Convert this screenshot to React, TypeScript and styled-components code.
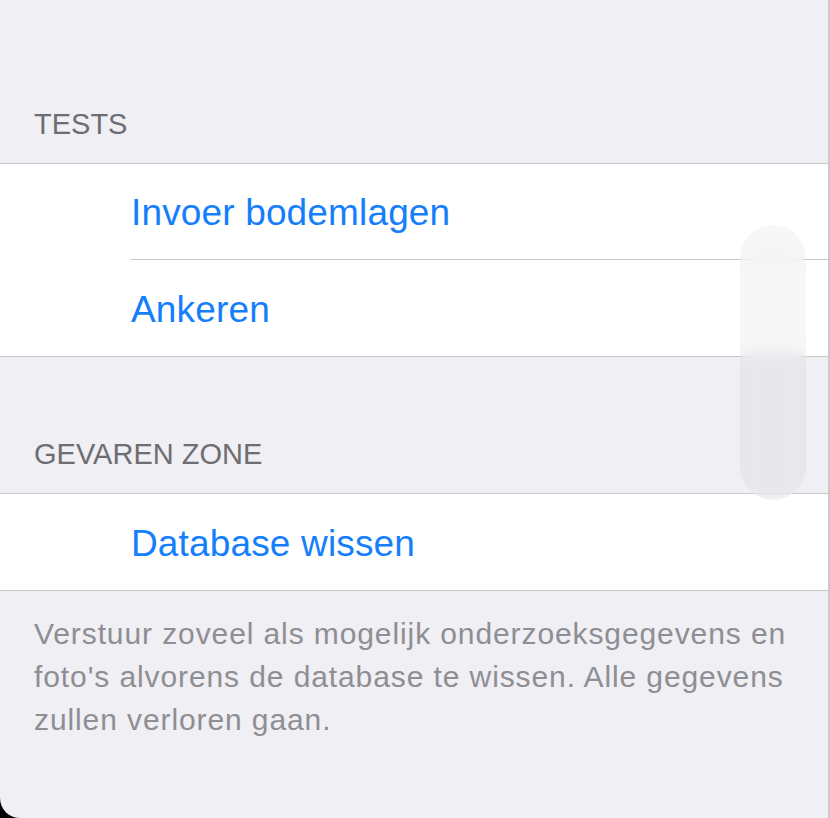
import React from "react";
import styled, { createGlobalStyle } from "styled-components";

const GlobalStyle = createGlobalStyle`
  html, body {
    margin: 0;
    padding: 0;
    background: #000000;
  }
  body {
    font-family: "Liberation Sans", Arial, sans-serif;
    -webkit-font-smoothing: antialiased;
  }
`;

const Page = styled.div`
  position: relative;
  width: 830px;
  height: 818px;
  box-sizing: border-box;
  background: #efeff4;
  border-right: 2px solid #c8c7cc;
  border-bottom-left-radius: 20px;
  overflow: hidden;
  display: flex;
  flex-direction: column;
`;

const SectionHeader = styled.div<{ $height: number }>`
  height: ${(props) => props.$height}px;
  box-sizing: border-box;
  display: flex;
  align-items: flex-end;
  padding: 0 34px 21px;
  font-size: 29px;
  line-height: 35px;
  color: #6d6d72;
  text-transform: uppercase;
`;

const Section = styled.div`
  background: #ffffff;
  border-top: 1px solid #c8c7cc;
  border-bottom: 1px solid #c8c7cc;
`;

const Row = styled.div`
  padding-left: 130px;
`;

const Cell = styled.div<{ $last?: boolean }>`
  height: 96px;
  box-sizing: border-box;
  display: flex;
  align-items: center;
  padding: 3px 0 0 1px;
  border-bottom: ${(props) => (props.$last ? "none" : "1px solid #c8c7cc")};
  font-size: 37px;
  letter-spacing: 0.15px;
  color: #157efb;
`;

const Footer = styled.div`
  padding: 21px 34px 0;
  font-size: 30px;
  line-height: 43px;
  letter-spacing: 0.9px;
  color: #8e8e93;
`;

const ScrollIndicator = styled.div`
  position: absolute;
  left: 740px;
  top: 225px;
  width: 66px;
  height: 275px;
  border-radius: 33px;
  background: rgba(0, 0, 0, 0.03);
  backdrop-filter: blur(8px);
`;

const sections = [
  { title: "Tests", height: 163, rows: ["Invoer bodemlagen", "Ankeren"] },
  { title: "Gevaren zone", height: 136, rows: ["Database wissen"] },
];

const App = () => {
  return (
    <>
      <GlobalStyle />
      <Page>
        {sections.map((section) => (
          <React.Fragment key={section.title}>
            <SectionHeader $height={section.height}>{section.title}</SectionHeader>
            <Section>
              {section.rows.map((row, i) => (
                <Row key={row}>
                  <Cell $last={i === section.rows.length - 1}>{row}</Cell>
                </Row>
              ))}
            </Section>
          </React.Fragment>
        ))}
        <Footer>
          Verstuur zoveel als mogelijk onderzoeksgegevens en foto's alvorens de
          database te wissen. Alle gegevens zullen verloren gaan.
        </Footer>
        <ScrollIndicator />
      </Page>
    </>
  );
};

export default App;
